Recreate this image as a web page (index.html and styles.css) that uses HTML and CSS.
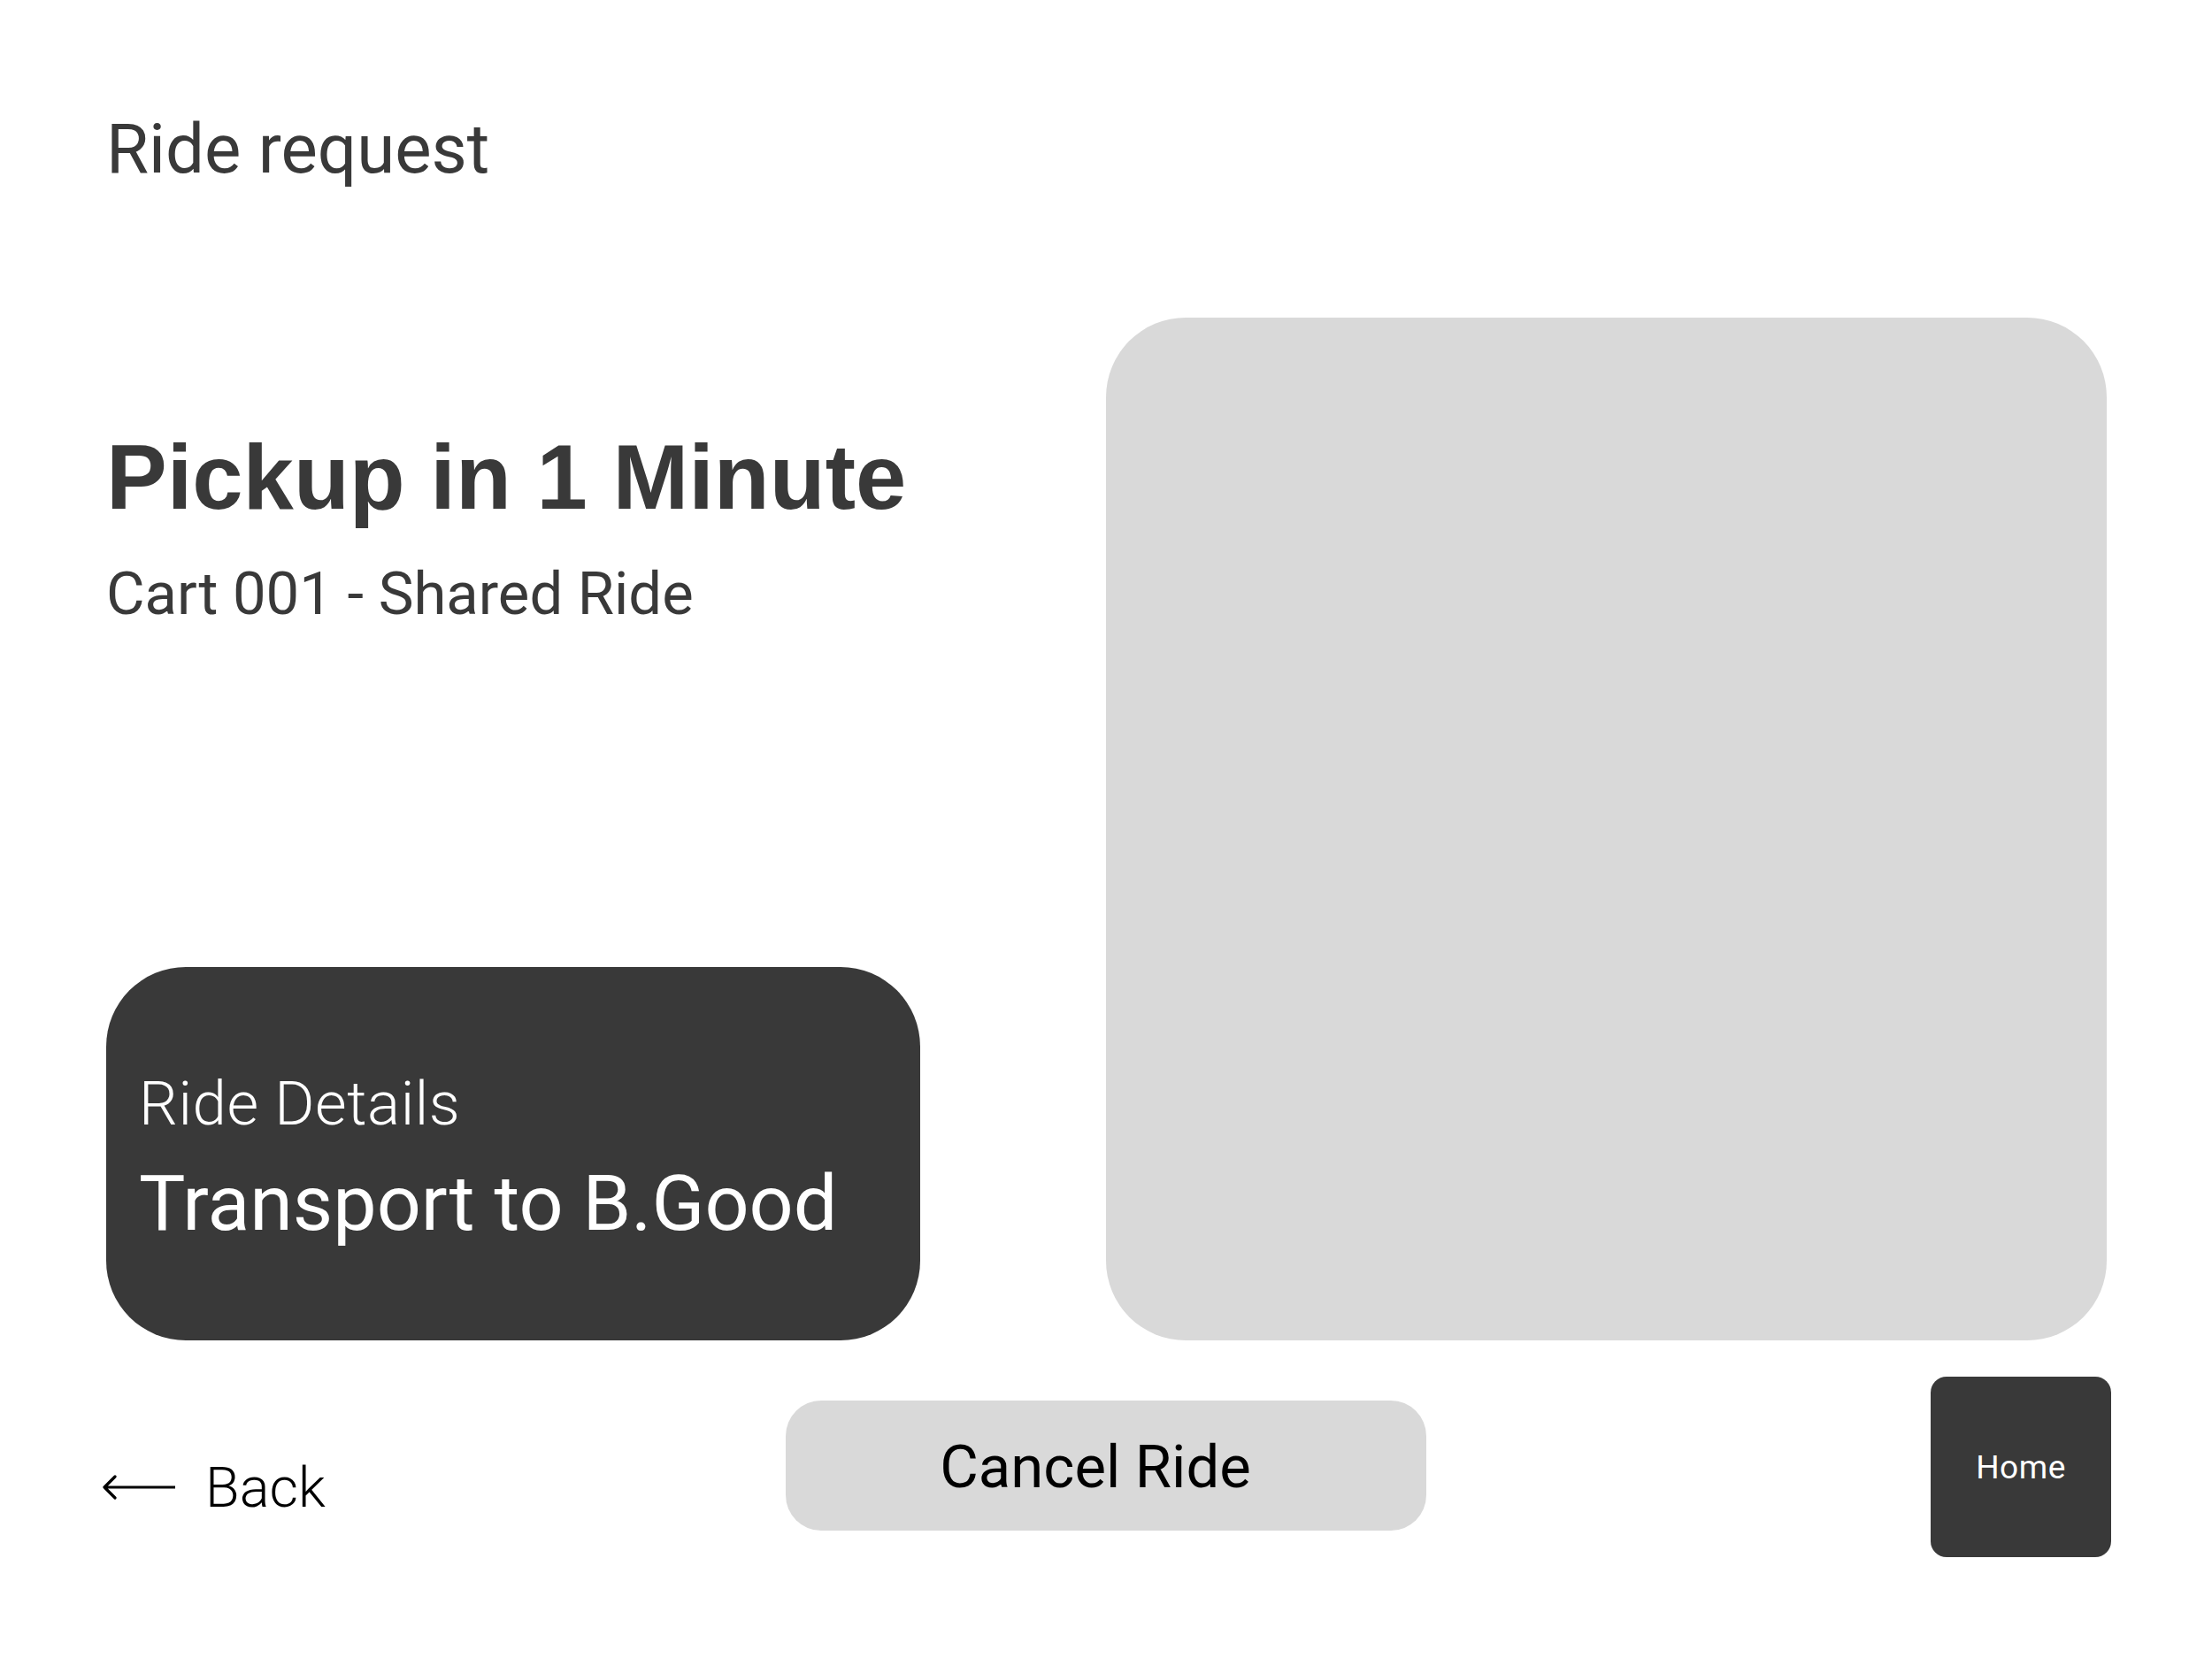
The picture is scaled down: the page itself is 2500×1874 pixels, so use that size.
FILE: index.html
```html
<!DOCTYPE html>
<html lang="en">
<head>
<meta charset="utf-8">
<title>Ride request</title>
<link rel="stylesheet" href="styles.css">
</head>
<body>
<div class="page">
  <header class="top">
    <h1 class="page-title">Ride request</h1>
  </header>
  <main class="main-row">
    <section class="left-col">
      <h2 class="pickup">Pickup in 1 Minute</h2>
      <p class="cart">Cart 001 - Shared Ride</p>
      <div class="details-card">
        <div class="details-label">Ride Details</div>
        <div class="details-value">Transport to B.Good</div>
      </div>
    </section>
    <div class="map-box"></div>
  </main>
  <footer class="bottom-bar">
    <a class="back" href="#">
      <svg class="back-arrow" width="82" height="30" viewBox="0 0 82 30" aria-hidden="true">
        <path d="M2 15 H82 M14 3 L2 15 L14 27" fill="none" stroke="#000" stroke-width="3.2" stroke-linecap="round" stroke-linejoin="round"/>
      </svg>
      <span class="back-text">Back</span>
    </a>
    <button class="cancel-btn" type="button">Cancel Ride</button>
    <span class="spacer"></span>
    <button class="home-btn" type="button">Home</button>
  </footer>
</div>
</body>
</html>
```

FILE: styles.css
```css
* {
  box-sizing: border-box;
}

html, body {
  margin: 0;
  padding: 0;
  background: #ffffff;
}

body {
  font-family: Roboto, "Liberation Sans", Arial, sans-serif;
  color: #393939;
}

.page {
  width: 2500px;
  height: 1874px;
  padding: 130px 114px 0 120px;
}

.top {
  height: 229px;
}

.page-title {
  margin: 0;
  font-family: Roboto, "Liberation Sans", sans-serif;
  font-weight: 400;
  font-size: 78px;
  line-height: 1;
  color: #393939;
}

.main-row {
  display: flex;
  gap: 210px;
  height: 1156px;
}

.left-col {
  width: 920px;
  display: flex;
  flex-direction: column;
}

.pickup {
  margin: 129px 0 0 0;
  font-family: "Liberation Sans", Arial, sans-serif;
  font-weight: 700;
  font-size: 103px;
  line-height: 1;
  color: #393939;
}

.cart {
  margin: 47px 0 0 0;
  font-family: Roboto, "Liberation Sans", sans-serif;
  font-weight: 400;
  font-size: 67px;
  line-height: 1;
  color: #393939;
}

.details-card {
  margin-top: auto;
  height: 422px;
  background: #393939;
  border-radius: 90px;
  padding: 120px 30px 0 37px;
  color: #ffffff;
}

.details-label {
  font-family: Roboto, "Liberation Sans", sans-serif;
  font-weight: 300;
  font-size: 69px;
  letter-spacing: 0.6px;
  line-height: 1;
}

.details-value {
  margin-top: 34px;
  font-family: Roboto, "Liberation Sans", sans-serif;
  font-weight: 400;
  font-size: 88px;
  line-height: 1;
}

.map-box {
  width: 1131px;
  height: 1156px;
  background: #d9d9d9;
  border-radius: 90px;
}

.bottom-bar {
  margin-top: 41px;
  display: grid;
  grid-template-columns: 768px 724px 1fr 204px;
  align-items: center;
  height: 204px;
}

.back {
  display: flex;
  align-items: center;
  gap: 34px;
  margin-left: -4px;
  margin-top: 46px;
  text-decoration: none;
  color: #000000;
}

.back-arrow {
  display: block;
}

.back-text {
  font-family: Roboto, "Liberation Sans", sans-serif;
  font-weight: 300;
  font-size: 63px;
  line-height: 1;
  color: #000000;
}

.cancel-btn {
  height: 147px;
  margin-top: -3px;
  border: none;
  border-radius: 40px;
  background: #d9d9d9;
  padding: 4px 24px 0 0;
  font-family: Roboto, "Liberation Sans", sans-serif;
  font-weight: 400;
  font-size: 67px;
  line-height: 1;
  color: #000000;
  cursor: pointer;
}

.home-btn {
  width: 204px;
  height: 204px;
  border: none;
  border-radius: 18px;
  background: #393939;
  padding: 0;
  font-family: Roboto, "Liberation Sans", sans-serif;
  font-weight: 400;
  font-size: 37px;
  letter-spacing: 0.5px;
  line-height: 1;
  color: #ffffff;
  cursor: pointer;
}
```
